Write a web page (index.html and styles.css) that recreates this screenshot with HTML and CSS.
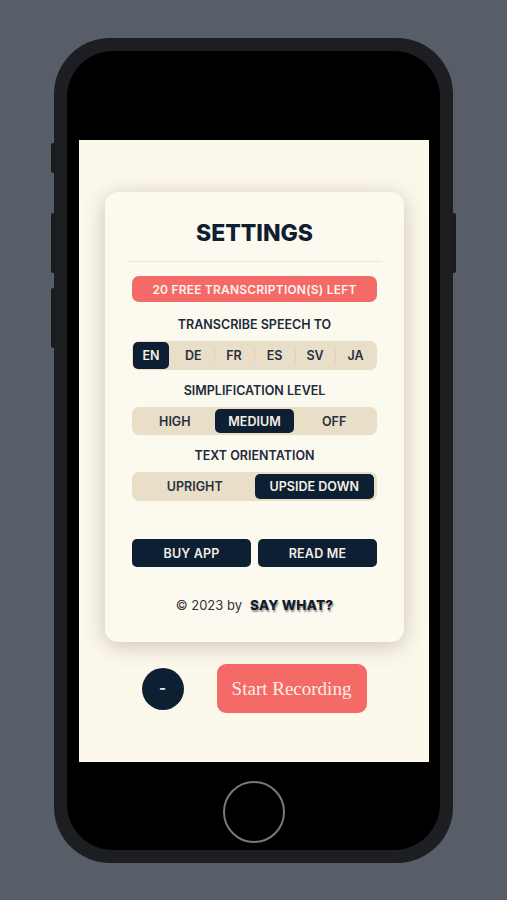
FILE: index.html
```html
<!DOCTYPE html>
<html>
<head>
<meta charset="utf-8">
<link rel="stylesheet" href="styles.css">
</head>
<body>
<div class="stage">
  <div class="phone">
    <span class="side side-mute"></span>
    <span class="side side-vol1"></span>
    <span class="side side-vol2"></span>
    <span class="side side-power"></span>
    <div class="bezel">
      <div class="screen">
        <div class="card">
          <h1 class="title">SETTINGS</h1>
          <div class="divider"></div>
          <div class="banner">20 FREE TRANSCRIPTION(S) LEFT</div>
          <div class="label">TRANSCRIBE SPEECH TO</div>
          <div class="seg seg-lang">
            <span class="opt active">EN</span>
            <span class="opt">DE</span>
            <span class="opt sep">FR</span>
            <span class="opt sep">ES</span>
            <span class="opt sep">SV</span>
            <span class="opt sep">JA</span>
          </div>
          <div class="label">SIMPLIFICATION LEVEL</div>
          <div class="seg">
            <span class="opt">HIGH</span>
            <span class="opt active">MEDIUM</span>
            <span class="opt">OFF</span>
          </div>
          <div class="label">TEXT ORIENTATION</div>
          <div class="seg">
            <span class="opt">UPRIGHT</span>
            <span class="opt active">UPSIDE DOWN</span>
          </div>
          <div class="actions">
            <button class="btn">BUY APP</button>
            <button class="btn">READ ME</button>
          </div>
          <div class="footer">
            <span class="copy">© 2023 by</span>
            <span class="brand">SAY WHAT?</span>
          </div>
        </div>
        <div class="controls">
          <button class="round">-</button>
          <button class="record">Start Recording</button>
        </div>
      </div>
      <div class="home-area">
        <div class="home"></div>
      </div>
    </div>
  </div>
</div>
</body>
</html>
```

FILE: styles.css
```css
* { box-sizing: border-box; }
html, body { margin: 0; padding: 0; }
body {
  background: #585e68;
  width: 507px;
  height: 900px;
  overflow: hidden;
  font-family: Inter, "Liberation Sans", sans-serif;
}
.stage {
  padding-top: 38px;
  display: flex;
  justify-content: center;
}
.phone {
  position: relative;
  width: 399px;
  height: 825px;
  background: #1d1e21;
  border-radius: 56px;
  padding: 13px;
}
.side {
  position: absolute;
  width: 4px;
  background: #1a1b1e;
  border-radius: 2px;
}
.side-mute { left: -3px; top: 105px; height: 30px; }
.side-vol1 { left: -3px; top: 175px; height: 60px; }
.side-vol2 { left: -3px; top: 250px; height: 60px; }
.side-power { right: -3px; top: 175px; height: 60px; }
.bezel {
  width: 100%;
  height: 799px;
  background: #000;
  border-radius: 46px;
  padding: 89px 11px 0 12px;
  display: flex;
  flex-direction: column;
}
.screen {
  height: 622px;
  background: #fcf8ec;
  padding: 52px 25px 0 26px;
  display: flex;
  flex-direction: column;
}
.card {
  background: #fcf9ef;
  border-radius: 13px;
  box-shadow: 0 4px 22px rgba(90, 80, 50, 0.3);
  padding: 25px 27px 27px;
  display: flex;
  flex-direction: column;
  height: 450px;
}
.title {
  margin: 0;
  font-size: 23px;
  line-height: 30px;
  font-weight: 800;
  text-align: center;
  color: #0f1e30;
  padding-top: 1px;
}
.divider {
  margin: 13px -5px 0;
  height: 1px;
  background: #ebe6d9;
}
.banner {
  margin-top: 14px;
  height: 27px;
  border-radius: 7px;
  background: #f46a67;
  color: #fff4ee;
  font-size: 12px;
  font-weight: 600;
  display: flex;
  align-items: center;
  justify-content: center;
  letter-spacing: 0.2px;
}
.label {
  margin-top: 15px;
  font-size: 12.5px;
  line-height: 16px;
  font-weight: 600;
  color: #1d2a3a;
  text-align: center;
}
.seg {
  margin-top: 8px;
  height: 29px;
  background: #e9dec8;
  border-radius: 7px;
  padding: 2px 3px;
  display: flex;
}
.seg-lang { padding: 1px; }
.seg + .label { margin-top: 13px; }
.opt {
  flex: 1;
  display: flex;
  align-items: center;
  justify-content: center;
  font-size: 12.5px;
  font-weight: 600;
  color: #27313e;
  border-radius: 5px;
  position: relative;
}
.opt.active {
  background: #0c1f33;
  color: #f6f0e4;
}
.seg-lang .opt.active { flex: 0 0 36px; margin-right: 4px; }
.seg-lang .opt.sep::before {
  content: "";
  position: absolute;
  left: 0;
  top: 6px;
  bottom: 6px;
  width: 1px;
  background: #ddd2bb;
}
.actions {
  margin-top: 38px;
  display: flex;
  gap: 7px;
}
.btn {
  flex: 1;
  height: 28px;
  border: 0;
  border-radius: 5px;
  background: #0c1f33;
  color: #f3eee4;
  font-family: Inter, "Liberation Sans", sans-serif;
  font-size: 12.5px;
  font-weight: 600;
  letter-spacing: 0.2px;
  padding: 0;
}
.footer {
  margin-top: 28px;
  line-height: 20px;
  display: flex;
  justify-content: center;
  align-items: center;
  gap: 8px;
}
.copy {
  font-size: 13px;
  color: #2f3236;
}
.brand {
  font-size: 13.5px;
  font-weight: 800;
  color: #0f1e30;
  text-shadow: 1px 1.5px 1.5px rgba(0, 0, 0, 0.4);
  letter-spacing: 0.2px;
}
.controls {
  margin-top: 22px;
  display: flex;
  justify-content: center;
  align-items: center;
  gap: 33px;
  padding-right: 1px;
}
.round {
  width: 42px;
  height: 42px;
  border-radius: 50%;
  border: 0;
  background: #0c1f33;
  color: #e8e6e2;
  font-family: Inter, "Liberation Sans", sans-serif;
  font-size: 15px;
  font-weight: 700;
  padding: 0 0 2px;
}
.record {
  width: 150px;
  height: 49px;
  border: 0;
  border-radius: 9px;
  background: #f46a67;
  color: #fdeee6;
  font-family: "Liberation Serif", "DejaVu Serif", serif;
  font-size: 19px;
  padding: 0;
}
.home-area {
  flex: 1;
  display: flex;
  justify-content: center;
  align-items: flex-start;
  padding-top: 19px;
  margin-left: -1px;
}
.home {
  width: 62px;
  height: 62px;
  border-radius: 50%;
  border: 2px solid #7a7a7c;
}
```
